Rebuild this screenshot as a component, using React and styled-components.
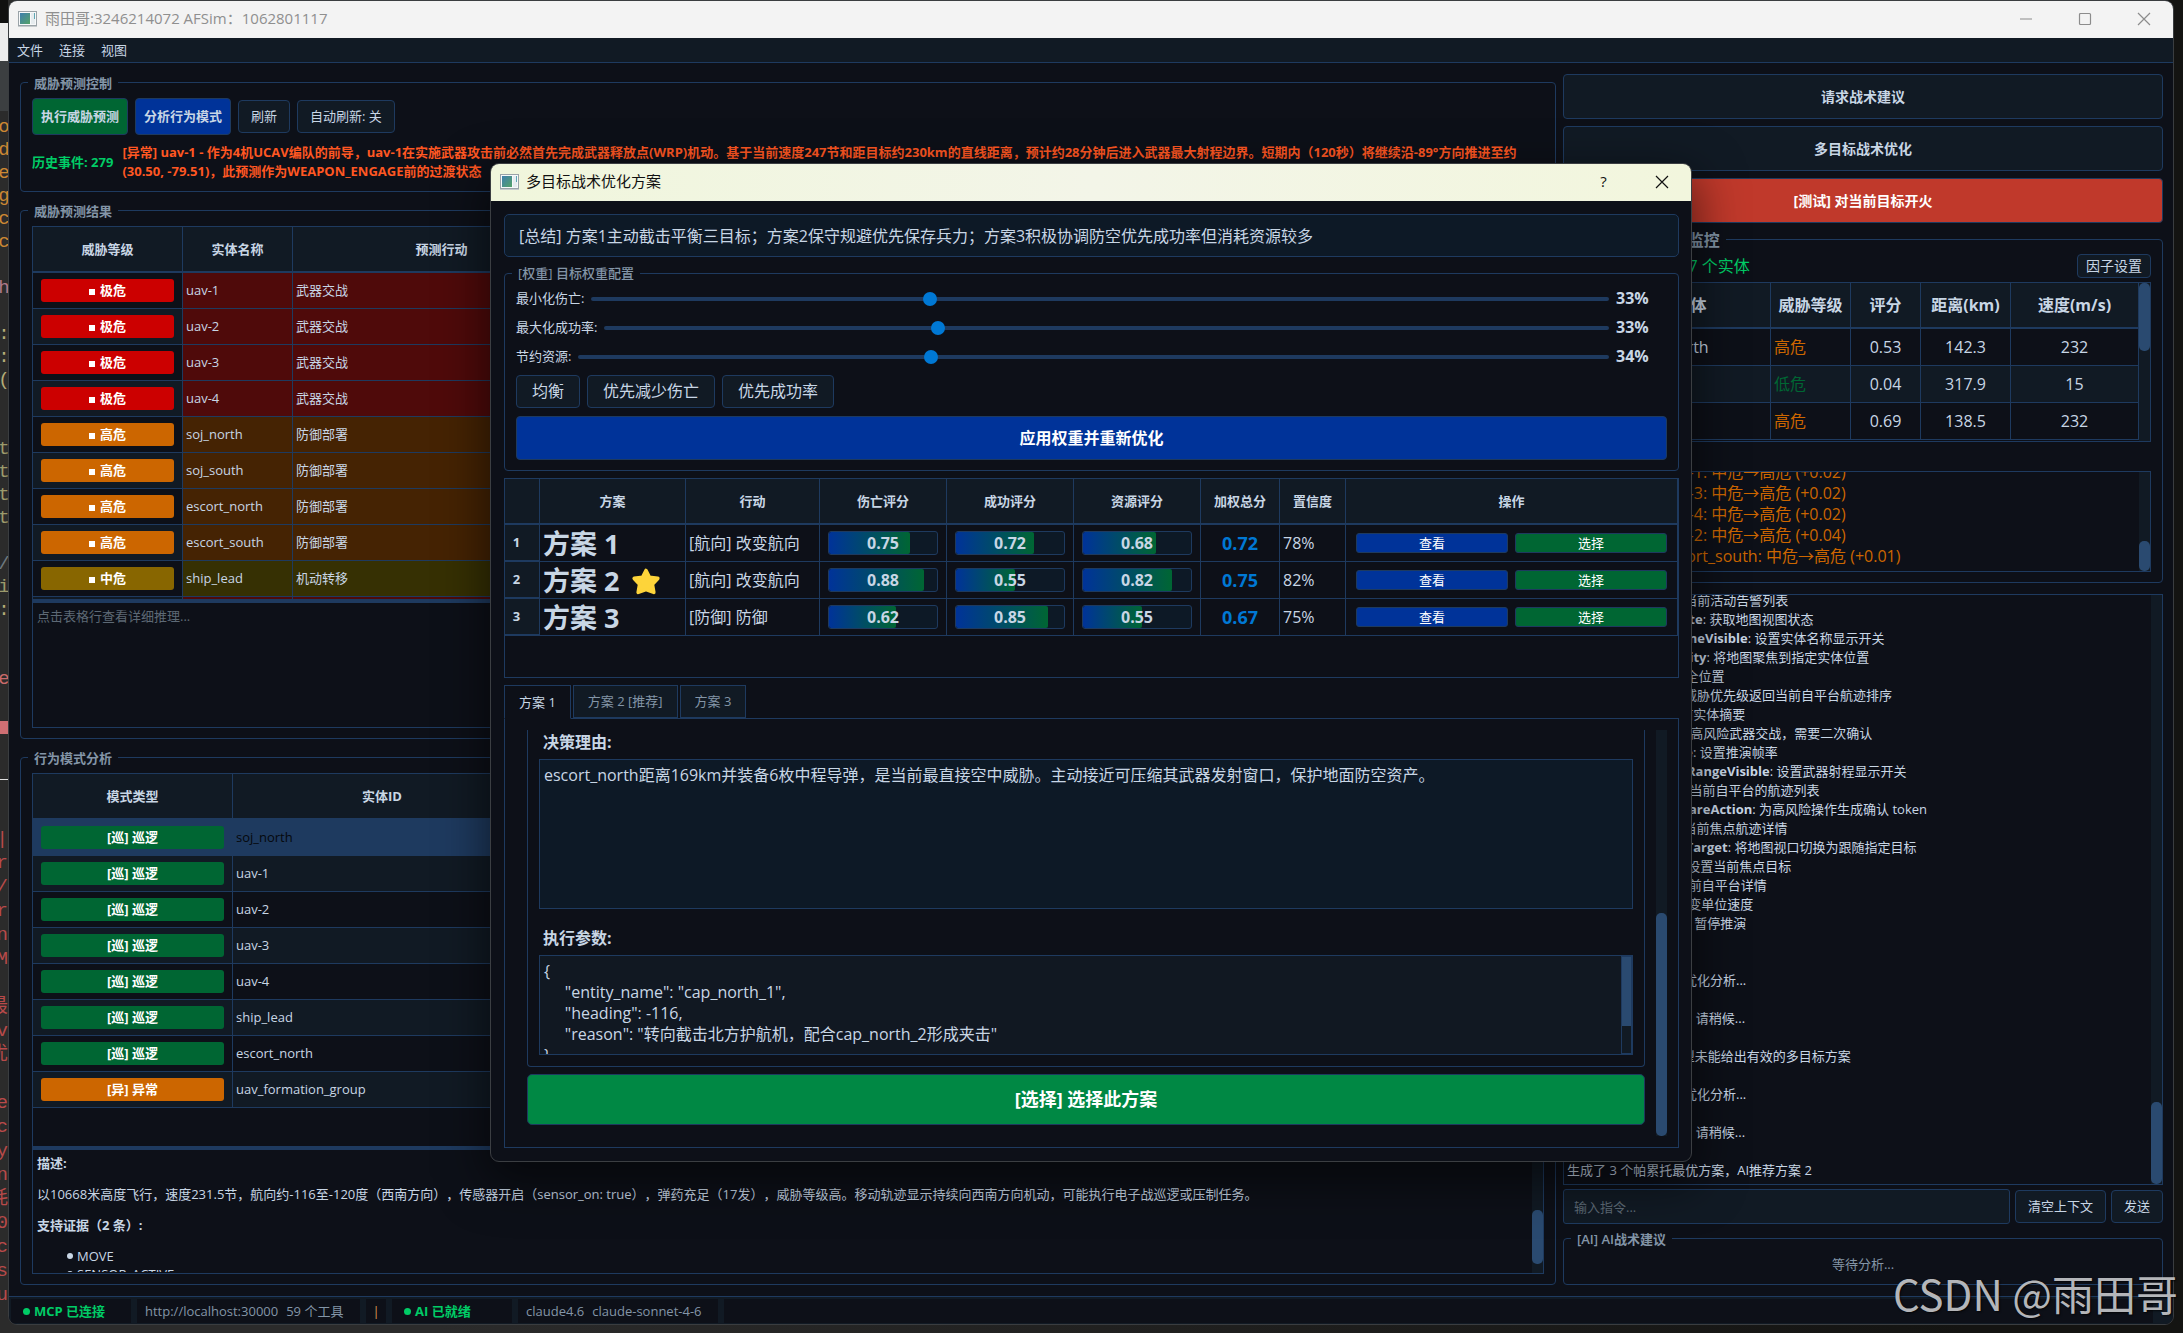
import React, { useState } from "react";
import styled, { createGlobalStyle } from "styled-components";

const threats = [
  ["极危", "uav-1", "武器交战"],
  ["极危", "uav-2", "武器交战"],
  ["极危", "uav-3", "武器交战"],
  ["极危", "uav-4", "武器交战"],
  ["高危", "soj_north", "防御部署"],
  ["高危", "soj_south", "防御部署"],
  ["高危", "escort_north", "防御部署"],
  ["高危", "escort_south", "防御部署"],
  ["中危", "ship_lead", "机动转移"],
  ["极危", "", ""],
];

const levels = {
  极危: { badge: "#cc0000", row: "#4f0a0a" },
  高危: { badge: "#cc6600", row: "#452303" },
  中危: { badge: "#886600", row: "#363003" },
};

const patterns = [
  ["巡", "巡逻", "soj_north"],
  ["巡", "巡逻", "uav-1"],
  ["巡", "巡逻", "uav-2"],
  ["巡", "巡逻", "uav-3"],
  ["巡", "巡逻", "uav-4"],
  ["巡", "巡逻", "ship_lead"],
  ["巡", "巡逻", "escort_north"],
  ["异", "异常", "uav_formation_group"],
];

const monitored = [
  ["escort_north", "高危", "0.53", "142.3", "232"],
  ["ship_lead", "低危", "0.04", "317.9", "15"],
  ["soj_north", "高危", "0.69", "138.5", "232"],
];

const alerts = [
  "[14:31:52] uav-1: 中危→高危 (+0.02)",
  "[14:31:52] uav-3: 中危→高危 (+0.02)",
  "[14:31:52] uav-4: 中危→高危 (+0.02)",
  "[14:31:57] uav-2: 中危→高危 (+0.04)",
  "[14:31:57] escort_south: 中危→高危 (+0.01)",
];

const tools = [
  ["getAllAlerts", "获取当前活动告警列表"],
  ["map.readViewState", "获取地图视图状态"],
  ["map.setEntityNameVisible", "设置实体名称显示开关"],
  ["maps.focusOnEntity", "将地图聚焦到指定实体位置"],
  ["moveTo", "移动到安全位置"],
  ["rankTracksBy", "按威胁优先级返回当前自平台航迹排序"],
  ["getEntity", "获取当前实体摘要"],
  ["weapons.engage", "高风险武器交战，需要二次确认"],
  ["sim.setFrameRate", "设置推演帧率"],
  ["maps.setWeaponRangeVisible", "设置武器射程显示开关"],
  ["listAirTracks", "获取当前自平台的航迹列表"],
  ["safetyGuard.prepareAction", "为高风险操作生成确认 token"],
  ["getFixTrack", "获取当前焦点航迹详情"],
  ["mapsView.followTarget", "将地图视口切换为跟随指定目标"],
  ["setFocusTargets", "设置当前焦点目标"],
  ["getVehicle", "获取当前自平台详情"],
  ["setUnitsSpeed", "改变单位速度"],
  ["simulation.pause", "暂停推演"],
];

const replies = [
  "",
  "",
  "正在进行多目标战术优化分析...",
  "",
  "正在调用AI生成方案，请稍候...",
  "",
  "[AI] 分析已完成，模型未能给出有效的多目标方案",
  "",
  "正在进行多目标战术优化分析...",
  "",
  "正在调用AI生成方案，请稍候...",
  "",
  "生成了 3 个帕累托最优方案，AI推荐方案 2",
];

const plans = [
  { name: "方案 1", action: "[航向] 改变航向", scores: [0.75, 0.72, 0.68], total: "0.72", conf: "78%" },
  { name: "方案 2", best: true, action: "[航向] 改变航向", scores: [0.88, 0.55, 0.82], total: "0.75", conf: "82%" },
  { name: "方案 3", action: "[防御] 防御", scores: [0.62, 0.85, 0.55], total: "0.67", conf: "75%" },
];

const params = `{
     "entity_name": "cap_north_1",
     "heading": -116,
     "reason": "转向截击北方护航机，配合cap_north_2形成夹击"
}`;

// fragments of the editor that stays open behind the window
const codeLines = [
  ["o", "#cc8833"], ["d", "#cc8833"], ["e", "#cc8833"], ["g", "#cc8833"], ["c", "#cc8833"], ["c", "#cc8833"],
  ["", ""], ["h", "#b07a8c"], ["", ""], [":", "#b5ad78"], [":", "#b5ad78"], ["(", "#b5ad78"], ["", ""], ["", ""],
  ["t", "#9c9a6c"], ["t", "#9c9a6c"], ["t", "#9c9a6c"], ["t", "#9c9a6c"], ["", ""], ["/", "#6f7a80"],
  ["i", "#9c9a6c"], [":", "#b5ad78"], ["", ""], ["", ""], ["e", "#c96a6a"],
];

const logLines = ["|", "r", "/", "r", "n", "M", "", "最", "v", "优", "", "e", "c", "y", "n", "耗", "0", "c", "s", "u"];

function AppIcon() {
  return (
    <svg width="19" height="16" viewBox="0 0 19 16" aria-hidden="true">
      <defs>
        <linearGradient id="pane" x1="0" y1="0" x2="1" y2="1">
          <stop offset="0" stopColor="#3f7fae" />
          <stop offset="1" stopColor="#55a268" />
        </linearGradient>
      </defs>
      <rect x="0.5" y="0.5" width="18" height="14" fill="#f7f9fa" stroke="#9aa3a8" />
      <rect x="2" y="2" width="10" height="11" fill="url(#pane)" />
      <rect x="13" y="2" width="4" height="11" fill="#e6ecef" />
      <rect x="16" y="2" width="1" height="6" fill="#5fa7b4" />
      <rect x="0" y="15" width="19" height="1" fill="#c5cacc" />
    </svg>
  );
}

function Glyph({ kind, color }) {
  return (
    <svg width="14" height="14" viewBox="0 0 14 14" fill="none" stroke={color} strokeWidth="1.2" aria-hidden="true">
      {kind === "min" && <path d="M1 7H13" />}
      {kind === "max" && <rect x="1.5" y="1.5" width="11" height="11" rx="1" />}
      {kind === "close" && <path d="M1 1L13 13M13 1L1 13" />}
    </svg>
  );
}

function Star() {
  return (
    <svg width="30" height="27" viewBox="0 0 30 27" aria-hidden="true">
      <path
        d="M15 2.5L18.4 9.4L26.8 10.4L21.4 16.2L22.8 24.4L15 21.6L7.2 24.4L8.6 16.2L3.2 10.4L11.6 9.4Z"
        fill="#fdd43a"
        stroke="#fdd43a"
        strokeWidth="3.6"
        strokeLinejoin="round"
      />
    </svg>
  );
}

function ScrollBar({ start, size, framed }) {
  return (
    <Track $framed={framed}>
      <Thumb $start={start} $size={size} $framed={framed} />
    </Track>
  );
}

function PredictionPanel() {
  return (
    <>
      <Group>
        <Legend>威胁预测控制</Legend>
        <ButtonRow>
          <BigButton $bg="#006633">执行威胁预测</BigButton>
          <BigButton $bg="#003399">分析行为模式</BigButton>
          <PlainButton>刷新</PlainButton>
          <PlainButton>自动刷新: 关</PlainButton>
        </ButtonRow>
        <EventRow>
          <EventCount>历史事件: 279</EventCount>
          <Warning>
            [异常] uav-1 - 作为4机UCAV编队的前导，uav-1在实施武器攻击前必然首先完成武器释放点(WRP)机动。基于当前速度247节和距目标约230km的直线距离，预计约28分钟后进入武器最大射程边界。短期内（120秒）将继续沿-89°方向推进至约
            <br />
            (30.50, -79.51)，此预测作为WEAPON_ENGAGE前的过渡状态
          </Warning>
        </EventRow>
      </Group>

      <Group>
        <Legend>威胁预测结果</Legend>
        <TableBox>
          <Table>
            <colgroup>
              <Col $w={150} />
              <Col $w={110} />
              <Col $w={298} />
              <col />
            </colgroup>
            <thead>
              <tr>
                <Th>威胁等级</Th>
                <Th>实体名称</Th>
                <Th>预测行动</Th>
                <Th />
              </tr>
            </thead>
            <tbody>
              {threats.map(([level, name, action], i) => (
                <Row key={i} $alt={i % 2 === 1}>
                  <Td $pad={8}>
                    {name && (
                      <Badge $bg={levels[level].badge}>
                        <Square />
                        {level}
                      </Badge>
                    )}
                  </Td>
                  <Td $bg={levels[level].row}>{name}</Td>
                  <Td $bg={levels[level].row}>{action}</Td>
                  <Td $bg={levels[level].row} />
                </Row>
              ))}
            </tbody>
          </Table>
        </TableBox>
        <Splitter />
        <ReasonText aria-label="详细推理" placeholder="点击表格行查看详细推理..." readOnly />
      </Group>

      <Group $grow>
        <Legend>行为模式分析</Legend>
        <TableBox>
          <Table>
            <colgroup>
              <Col $w={200} />
              <Col $w={299} />
              <col />
            </colgroup>
            <thead>
              <tr>
                <Th>模式类型</Th>
                <Th>实体ID</Th>
                <Th />
              </tr>
            </thead>
            <tbody>
              {patterns.map(([short, label, id], i) => (
                <Row key={id} $alt={i % 2 === 1} $selected={i === 0}>
                  <Td $pad={8}>
                    <Badge $bg={short === "异" ? "#cc6600" : "#006633"}>
                      [{short}] {label}
                    </Badge>
                  </Td>
                  <Td>{id}</Td>
                  <Td />
                </Row>
              ))}
            </tbody>
          </Table>
        </TableBox>
        <Splitter />
        <Detail>
          <DetailText>
            <h4>描述:</h4>
            <p>
              以10668米高度飞行，速度231.5节，航向约-116至-120度（西南方向），传感器开启（sensor_on: true），弹药充足（17发），威胁等级高。移动轨迹显示持续向西南方向机动，可能执行电子战巡逻或压制任务。
            </p>
            <h4>支持证据（2 条）:</h4>
            <ul>
              <li>MOVE</li>
              <li>SENSOR_ACTIVE</li>
            </ul>
          </DetailText>
          <ScrollBar start={49} size={44} />
        </Detail>
      </Group>
    </>
  );
}

function SidePanel() {
  return (
    <>
      <SideButtons>
        <SideButton>请求战术建议</SideButton>
        <SideButton>多目标战术优化</SideButton>
        <SideButton $danger>[测试] 对当前目标开火</SideButton>
      </SideButtons>

      <Group $large>
        <Legend $large>[威胁] 实时态势监控</Legend>
        <MonitorHead>
          <MonitorState>正在实时监控: 17 个实体</MonitorState>
          <SmallButton>因子设置</SmallButton>
        </MonitorHead>
        <MonitorTable>
          <Table $size={16}>
            <colgroup>
              <Col $w={35} />
              <Col $w={160} />
              <Col $w={80} />
              <Col $w={70} />
              <Col $w={90} />
              <col />
            </colgroup>
            <thead>
              <tr>
                <Th />
                <Th>实体</Th>
                <Th>威胁等级</Th>
                <Th>评分</Th>
                <Th>距离(km)</Th>
                <Th>速度(m/s)</Th>
              </tr>
            </thead>
            <tbody>
              {monitored.map(([name, level, score, dist, speed], i) => (
                <Row key={name} $alt={i % 2 === 1} $tall>
                  <RowHead>{i + 1}</RowHead>
                  <Td>{name}</Td>
                  <Td $color={level === "低危" ? "#006633" : "#cc6600"}>{level}</Td>
                  <Td $center>{score}</Td>
                  <Td $center>{dist}</Td>
                  <Td $center>{speed}</Td>
                </Row>
              ))}
            </tbody>
          </Table>
          <ScrollBar start={0} size={43} />
        </MonitorTable>
        <AlertBox>
          <AlertLines>
            {alerts.map((line) => (
              <div key={line}>{line}</div>
            ))}
          </AlertLines>
          <ScrollBar start={70} size={30} />
        </AlertBox>
      </Group>

      <ChatBox>
        <ChatLines>
          {tools.map(([name, text]) => (
            <ChatLine key={name}>
              • <b>{name}</b>: {text}
            </ChatLine>
          ))}
          {replies.map((text, i) => (
            <ChatLine key={i}>{text}</ChatLine>
          ))}
        </ChatLines>
        <ScrollBar start={86} size={14} />
      </ChatBox>
      <InputRow>
        <CommandInput aria-label="指令" placeholder="输入指令..." />
        <PlainButton>清空上下文</PlainButton>
        <PlainButton>发送</PlainButton>
      </InputRow>
      <Group>
        <Legend>[AI] AI战术建议</Legend>
        <Waiting>等待分析...</Waiting>
      </Group>
    </>
  );
}

function PlanDialog() {
  const [weights, setWeights] = useState([33, 33, 34]);
  const labels = ["最小化伤亡:", "最大化成功率:", "节约资源:"];

  const changeWeight = (index, value) => {
    setWeights(weights.map((w, i) => (i === index ? Number(value) : w)));
  };

  return (
    <Dialog role="dialog" aria-label="多目标战术优化方案">
      <DialogTitle>
        <AppIcon />
        <span>多目标战术优化方案</span>
        <TitleButton aria-label="帮助">?</TitleButton>
        <TitleButton aria-label="关闭">
          <Glyph kind="close" color="#111" />
        </TitleButton>
      </DialogTitle>
      <DialogBody>
        <Summary>[总结] 方案1主动截击平衡三目标；方案2保守规避优先保存兵力；方案3积极协调防空优先成功率但消耗资源较多</Summary>

        <Group>
          <Legend $light>[权重] 目标权重配置</Legend>
          <Weights>
            {labels.map((label, i) => (
              <SliderRow key={label}>
                <label htmlFor={`weight-${i}`}>{label}</label>
                <Slider
                  id={`weight-${i}`}
                  type="range"
                  min="0"
                  max="100"
                  value={weights[i]}
                  onChange={(e) => changeWeight(i, e.target.value)}
                />
                <Percent>{weights[i]}%</Percent>
              </SliderRow>
            ))}
            <ButtonRow>
              <PlainButton $size={16}>均衡</PlainButton>
              <PlainButton $size={16}>优先减少伤亡</PlainButton>
              <PlainButton $size={16}>优先成功率</PlainButton>
            </ButtonRow>
            <ApplyButton>应用权重并重新优化</ApplyButton>
          </Weights>
        </Group>

        <PlanTable>
          <Table>
            <colgroup>
              <Col $w={35} />
              <Col $w={146} />
              <Col $w={134} />
              <Col $w={127} />
              <Col $w={127} />
              <Col $w={127} />
              <Col $w={79} />
              <Col $w={66} />
              <col />
            </colgroup>
            <thead>
              <tr>
                <Th />
                <Th>方案</Th>
                <Th>行动</Th>
                <Th>伤亡评分</Th>
                <Th>成功评分</Th>
                <Th>资源评分</Th>
                <Th>加权总分</Th>
                <Th>置信度</Th>
                <Th>操作</Th>
              </tr>
            </thead>
            <tbody>
              {plans.map((plan, i) => (
                <Row key={plan.name} $tall>
                  <RowHead>{i + 1}</RowHead>
                  <Td>
                    <PlanName>
                      {plan.name}
                      {plan.best && <Star />}
                    </PlanName>
                  </Td>
                  <Td $size={16}>{plan.action}</Td>
                  {plan.scores.map((score, k) => (
                    <Td key={k} $pad={8}>
                      <Meter>
                        <MeterFill style={{ width: `${score * 100}%` }} />
                        <span>{score.toFixed(2)}</span>
                      </Meter>
                    </Td>
                  ))}
                  <Total>{plan.total}</Total>
                  <Td $size={16}>{plan.conf}</Td>
                  <Td $pad={10}>
                    <Actions>
                      <ActionButton $bg="#003399">查看</ActionButton>
                      <ActionButton $bg="#006633">选择</ActionButton>
                    </Actions>
                  </Td>
                </Row>
              ))}
            </tbody>
          </Table>
        </PlanTable>

        <div>
          <Tabs role="tablist">
            <Tab role="tab" aria-selected="true" $active>方案 1</Tab>
            <Tab role="tab" aria-selected="false">方案 2 [推荐]</Tab>
            <Tab role="tab" aria-selected="false">方案 3</Tab>
          </Tabs>
          <Pane role="tabpanel">
            <PaneContent>
              <PlanDetail>
                <FieldLabel htmlFor="reason">决策理由:</FieldLabel>
                <ReasonBox
                  id="reason"
                  readOnly
                  value="escort_north距离169km并装备6枚中程导弹，是当前最直接空中威胁。主动接近可压缩其武器发射窗口，保护地面防空资产。"
                />
                <FieldLabel htmlFor="params" $spaced>执行参数:</FieldLabel>
                <ParamBox>
                  <ParamText id="params" readOnly value={params} />
                  <ScrollBar start={0} size={72} framed />
                </ParamBox>
              </PlanDetail>
              <ChooseButton>[选择] 选择此方案</ChooseButton>
            </PaneContent>
            <ScrollBar start={45} size={55} />
          </Pane>
        </div>
      </DialogBody>
    </Dialog>
  );
}

function App() {
  return (
    <Desktop>
      <GlobalStyle />
      <EditorStrip aria-hidden="true">
        <CodeBlock>
          {codeLines.map(([text, color], i) => (
            <CodeLine key={i} $color={color}>{text}</CodeLine>
          ))}
        </CodeBlock>
        <ErrorBar />
        <LogBlock>
          {logLines.map((text, i) => (
            <CodeLine key={i} $color="#b84a4a" $log>{text}</CodeLine>
          ))}
        </LogBlock>
      </EditorStrip>

      <Window>
        <TitleBar>
          <AppIcon />
          <span>雨田哥:3246214072 AFSim：1062801117</span>
          <TitleButton aria-label="最小化">
            <Glyph kind="min" color="#8c8c8c" />
          </TitleButton>
          <TitleButton aria-label="最大化">
            <Glyph kind="max" color="#8c8c8c" />
          </TitleButton>
          <TitleButton aria-label="关闭">
            <Glyph kind="close" color="#8c8c8c" />
          </TitleButton>
        </TitleBar>
        <MenuBar>
          <MenuItem>文件</MenuItem>
          <MenuItem>连接</MenuItem>
          <MenuItem>视图</MenuItem>
        </MenuBar>
        <Main>
          <LeftColumn>
            <PredictionPanel />
          </LeftColumn>
          <RightColumn>
            <SidePanel />
          </RightColumn>
        </Main>
        <StatusBar>
          <StatusItem $w={120} $ok>
            <Dot />
            MCP 已连接
          </StatusItem>
          <StatusItem $w={223}>
            <span>http://localhost:30000</span>
            <span>59 个工具</span>
          </StatusItem>
          <StatusItem $w={20} $divider>|</StatusItem>
          <StatusItem $w={120} $ok>
            <Dot />
            AI 已就绪
          </StatusItem>
          <StatusItem $w={200}>
            <span>claude4.6</span>
            <span>claude-sonnet-4-6</span>
          </StatusItem>
          <StatusItem $w={20} $fill />
        </StatusBar>
      </Window>

      <PlanDialog />
      <Watermark>CSDN @雨田哥</Watermark>
    </Desktop>
  );
}

const line = "#1e3a5f";
const panel = "#111a24";
const base = "#0d1018";
const text = "#c8d6e5";
const muted = "#8395a7";

const GlobalStyle = createGlobalStyle`
  * {
    box-sizing: border-box;
  }
  body {
    margin: 0;
    background: #141414;
    color: ${text};
    font-family: "Open Sans", "Noto Sans CJK SC", sans-serif;
    font-size: 13px;
    line-height: 19px;
    text-spacing-trim: space-all;
  }
  button, input, textarea {
    font: inherit;
    color: inherit;
  }
  button {
    cursor: pointer;
    white-space: nowrap;
  }
`;

const Desktop = styled.div`
  position: relative;
  display: grid;
  grid-template-columns: 8px minmax(0, 1fr) 9px;
  min-height: 100vh;
  padding-bottom: 8px;
  overflow: hidden;
  background: linear-gradient(90deg, #2b2b2b 0%, #2b2b2b 20%, #141412 90%);
`;

const EditorStrip = styled.div`
  padding-top: 116px;
  overflow: hidden;
  font-family: "Liberation Mono", "Noto Sans CJK SC", monospace;
  font-size: 19px;
  background: linear-gradient(#101010 0 23px, #ececec 23px 61px, #3c3f41 61px 111px, #2b2b2b 111px);
`;

const CodeBlock = styled.div`
  height: 605px;
`;

const CodeLine = styled.div`
  display: flex;
  justify-content: ${(props) => (props.$log ? "flex-end" : "center")};
  height: ${(props) => (props.$log ? 24 : 23)}px;
  line-height: 23px;
  color: ${(props) => props.$color};
`;

const ErrorBar = styled.div`
  height: 13px;
  background: #cf6f73;
`;

const LogBlock = styled.div`
  margin-top: 45px;
  padding-top: 48px;
  border-top: 1px solid #e0e0e0;
`;

const Window = styled.div`
  display: flex;
  flex-direction: column;
  min-width: 0;
  border: 1px solid #3a3d40;
  border-radius: 9px;
  overflow: hidden;
  background: ${base};
`;

const TitleBar = styled.header`
  display: flex;
  align-items: center;
  gap: 8px;
  height: 37px;
  padding: 0 4px 2px 9px;
  background: #f3f3f3;
  color: #8f8f8f;
  font-size: 15px;

  span {
    flex: 1;
  }
`;

const TitleButton = styled.button`
  display: flex;
  align-items: center;
  justify-content: center;
  width: 51px;
  height: 35px;
  padding: 0;
  border: none;
  background: none;
`;

const MenuBar = styled.nav`
  display: flex;
  height: 25px;
  background: ${panel};
  border-bottom: 1px solid ${line};
`;

const MenuItem = styled.button`
  padding: 0 8px;
  border: none;
  background: none;
`;

const Main = styled.main`
  display: flex;
  flex: 1;
  gap: 7px;
  padding: 9px 10px 11px 11px;
`;

const LeftColumn = styled.section`
  display: flex;
  flex: 1;
  flex-direction: column;
  gap: 8px;
  min-width: 0;
`;

const RightColumn = styled.aside`
  display: flex;
  flex-direction: column;
  gap: 4px;
  width: 600px;
`;

const Group = styled.fieldset`
  display: flex;
  flex-direction: column;
  flex: ${(props) => (props.$grow ? 1 : "none")};
  min-width: 0;
  margin: 0;
  padding: ${(props) => (props.$large ? 2 : 5)}px 11px 10px;
  border: 1px solid ${line};
  border-radius: 4px;
`;

const Legend = styled.legend`
  margin-left: -4px;
  padding: ${(props) => (props.$light ? 0 : 2)}px 6px 0;
  color: ${muted};
  font-size: ${(props) => (props.$large ? 16 : 13)}px;
  font-weight: ${(props) => (props.$light ? 500 : 600)};
  line-height: ${(props) => (props.$large ? 23 : 19)}px;
`;

const ButtonRow = styled.div`
  display: flex;
  align-items: center;
  gap: 7px;
`;

const BaseButton = styled.button`
  border: 1px solid ${line};
  border-radius: 4px;
`;

const BigButton = styled(BaseButton)`
  height: 37px;
  padding: 0 8px;
  background: ${(props) => props.$bg};
  font-weight: 700;
`;

const PlainButton = styled(BaseButton)`
  height: 33px;
  padding: 0 ${(props) => (props.$size ? 15 : 12)}px;
  background: ${panel};
  font-size: ${(props) => props.$size || 13}px;
`;

const SmallButton = styled(BaseButton)`
  height: 24px;
  padding: 0 8px;
  background: ${panel};
  font-size: 14px;
  line-height: 20px;
`;

const EventRow = styled.div`
  display: flex;
  align-items: center;
  gap: 9px;
  margin-top: 8px;
  font-weight: 700;
`;

const EventCount = styled.span`
  color: #00cc66;
  white-space: nowrap;
`;

const Warning = styled.p`
  flex: 1;
  min-width: 0;
  margin: 0;
  overflow: hidden;
  color: #ff5722;
  white-space: nowrap;
`;

const TableBox = styled.div`
  height: 373px;
  overflow: hidden;
  border: 1px solid ${line};
  border-bottom: none;
`;

const Table = styled.table`
  width: 100%;
  table-layout: fixed;
  border-collapse: separate;
  border-spacing: 0;
  font-size: ${(props) => props.$size || 13}px;
`;

const Col = styled.col`
  width: ${(props) => props.$w}px;
`;

const Th = styled.th`
  height: 46px;
  padding: 0;
  background: ${panel};
  border-right: 1px solid ${line};
  border-bottom: 2px solid ${line};
  font-weight: 700;
  white-space: nowrap;
`;

const Td = styled.td`
  padding: 0 ${(props) => props.$pad || 3}px;
  background: ${(props) => props.$bg || "transparent"};
  border-right: 1px solid ${line};
  border-bottom: 1px solid ${line};
  color: ${(props) => props.$color || "inherit"};
  font-size: ${(props) => (props.$size ? `${props.$size}px` : "inherit")};
  text-align: ${(props) => (props.$center ? "center" : "left")};
  white-space: nowrap;
`;

const Row = styled.tr`
  height: ${(props) => (props.$tall ? 37 : 36)}px;
  background: ${(props) => (props.$selected ? line : props.$alt ? panel : base)};
  color: ${(props) => (props.$selected ? "#05080c" : "inherit")};
`;

const RowHead = styled.th`
  padding: 0 11px 0 0;
  background: ${panel};
  border-right: 1px solid ${line};
  border-bottom: 2px solid ${line};
  font-size: 13px;
  font-weight: 700;
`;

const Badge = styled.div`
  display: flex;
  align-items: center;
  justify-content: center;
  gap: 5px;
  height: 23px;
  border-radius: 3px;
  background: ${(props) => props.$bg};
  color: #fff;
  font-weight: 700;
  white-space: pre;
`;

const Square = styled.i`
  width: 6px;
  height: 6px;
  margin-top: 2px;
  background: #fff;
`;

const Splitter = styled.div`
  height: 4px;
  background: ${line};
`;

const ReasonText = styled.textarea`
  height: 125px;
  padding: 4px;
  border: 1px solid ${line};
  border-top: none;
  outline: none;
  background: transparent;
  resize: none;

  &::placeholder {
    color: #5d6975;
  }
`;

const Detail = styled.div`
  display: flex;
  flex: 1 0 0;
  min-height: 0;
  overflow: hidden;
  border: 1px solid ${line};
  border-top: none;
`;

const DetailText = styled.div`
  flex: 1;
  height: 122px;
  padding: 4px 4px 0;
  overflow: hidden;

  h4,
  p {
    margin: 0 0 12px;
    font-size: 13px;
  }
  ul {
    margin: 0;
    padding-left: 30px;
    list-style: none;
  }
  li {
    display: flex;
    align-items: center;
    gap: 4px;
    line-height: 18px;
  }
  li::before {
    content: "";
    width: 6px;
    height: 6px;
    border-radius: 50%;
    background: ${text};
  }
`;

const Track = styled.div`
  flex: none;
  align-self: stretch;
  width: 11px;
  background: ${panel};
  border: ${(props) => (props.$framed ? `1px solid ${line}` : "none")};
`;

const Thumb = styled.div`
  position: relative;
  top: ${(props) => props.$start}%;
  height: ${(props) => props.$size}%;
  border-radius: ${(props) => (props.$framed ? 0 : 5)}px;
  background: #2a4a70;
`;

const SideButtons = styled.div`
  display: flex;
  flex-direction: column;
  gap: 7px;
  padding-top: 2px;
`;

const SideButton = styled(BaseButton)`
  height: 45px;
  background: ${(props) => (props.$danger ? "#c0392b" : panel)};
  color: ${(props) => (props.$danger ? "#fff" : text)};
  font-size: 14px;
  font-weight: 700;
`;

const MonitorHead = styled.div`
  display: flex;
  align-items: center;
  justify-content: space-between;
  margin-bottom: 4px;
`;

const MonitorState = styled.span`
  color: #00cc66;
  font-size: 16px;
`;

const MonitorTable = styled.div`
  display: flex;
  align-items: flex-start;
  height: 160px;
  overflow: hidden;
  border: 1px solid ${line};
`;

const AlertBox = styled.div`
  display: flex;
  height: 101px;
  margin-top: 29px;
  border: 1px solid ${line};
`;

const AlertLines = styled.div`
  display: flex;
  flex: 1;
  flex-direction: column;
  justify-content: flex-end;
  padding: 0 8px 4px;
  overflow: hidden;
  color: #cc6600;
  font-size: 16px;
  line-height: 21px;
`;

const ChatBox = styled.div`
  display: flex;
  flex: 1 0 0;
  min-height: 0;
  margin-top: 7px;
  border: 1px solid ${line};
`;

const ChatLines = styled.div`
  display: flex;
  flex: 1;
  flex-direction: column;
  justify-content: flex-end;
  padding: 0 3px 4px;
  overflow: hidden;
`;

const ChatLine = styled.div`
  flex: none;
  height: 19px;
  white-space: nowrap;
`;

const InputRow = styled.div`
  display: flex;
  align-items: center;
  gap: 5px;
`;

const CommandInput = styled.input`
  flex: 1;
  height: 35px;
  padding: 0 10px;
  border: 1px solid ${line};
  border-radius: 3px;
  background: ${panel};

  &::placeholder {
    color: #5d6975;
  }
`;

const Waiting = styled.p`
  margin: 0;
  color: ${muted};
  line-height: 20px;
  text-align: center;
`;

const StatusBar = styled.footer`
  display: flex;
  align-items: center;
  gap: 6px;
  height: 28px;
  padding: 0 20px 0 2px;
  border-top: 1px solid ${line};
  background: ${panel};
`;

const StatusItem = styled.div`
  display: flex;
  align-items: center;
  justify-content: ${(props) => (props.$divider ? "center" : "flex-start")};
  flex: ${(props) => (props.$fill ? 1 : "none")};
  gap: ${(props) => (props.$ok ? 4 : 8)}px;
  min-width: ${(props) => props.$w}px;
  height: 24px;
  padding: 1px ${(props) => (props.$divider ? 4 : props.$ok ? 12 : 8)}px 0;
  background: ${base};
  color: ${(props) => (props.$ok ? "#00cc66" : props.$divider ? "#d89a55" : muted)};
  font-weight: ${(props) => (props.$ok ? 700 : 400)};
`;

const Dot = styled.i`
  width: 7px;
  height: 7px;
  border-radius: 50%;
  background: #00cc66;
`;

const Dialog = styled.div`
  position: absolute;
  top: 163px;
  left: 490px;
  width: 1202px;
  border: 1px solid #3b3e42;
  border-radius: 9px;
  overflow: hidden;
  background: ${base};
  box-shadow: 0 16px 48px 4px rgba(0, 0, 0, 0.55);
`;

const DialogTitle = styled.div`
  display: flex;
  align-items: center;
  gap: 7px;
  height: 37px;
  padding: 0 4px 2px 9px;
  background: linear-gradient(90deg, #f0f6dc, #f3f5e8 50%, #f2f6dd);
  color: #111;
  font-size: 15px;

  span {
    flex: 1;
  }
`;

const DialogBody = styled.div`
  display: flex;
  flex-direction: column;
  gap: 7px;
  padding: 13px 12px 13px 13px;
`;

const Summary = styled.div`
  padding: 11px 14px 9px;
  border: 1px solid ${line};
  border-radius: 5px;
  background: #0d1926;
  font-size: 16px;
  line-height: 21px;
`;

const Weights = styled.div`
  display: flex;
  flex-direction: column;
  gap: 8px;
`;

const SliderRow = styled.div`
  display: flex;
  align-items: center;
  gap: 7px;
  height: 21px;
`;

const Slider = styled.input`
  flex: 1;
  height: 14px;
  margin: 0;
  appearance: none;
  background: transparent;

  &::-webkit-slider-runnable-track {
    height: 4px;
    border-radius: 2px;
    background: ${line};
  }
  &::-webkit-slider-thumb {
    width: 14px;
    height: 14px;
    margin-top: -5px;
    appearance: none;
    border-radius: 50%;
    background: #0078d4;
  }
`;

const Percent = styled.span`
  width: 51px;
  font-size: 16px;
  font-weight: 700;
`;

const ApplyButton = styled(BaseButton)`
  height: 44px;
  background: #003399;
  color: #fff;
  font-size: 16px;
  font-weight: 700;
`;

const PlanTable = styled.div`
  height: 200px;
  overflow: hidden;
  border: 1px solid ${line};
`;

const PlanName = styled.div`
  display: flex;
  align-items: center;
  gap: 12px;
  padding-top: 2px;
  font-size: 27px;
  font-weight: 700;
  line-height: 32px;
`;

const Meter = styled.div`
  position: relative;
  height: 24px;
  border: 1px solid ${line};
  border-radius: 3px;
  overflow: hidden;
  background: #0d1926;
  font-size: 16px;
  font-weight: 700;
  line-height: 22px;
  text-align: center;

  span {
    position: relative;
  }
`;

const MeterFill = styled.div`
  position: absolute;
  top: 0;
  bottom: 0;
  left: 0;
  border-radius: 2px;
  background: linear-gradient(90deg, #003399, #006633);
`;

const Total = styled(Td)`
  color: #0078d4;
  font-size: 18px;
  font-weight: 700;
  text-align: center;
`;

const Actions = styled.div`
  display: flex;
  gap: 7px;
`;

const ActionButton = styled(BaseButton)`
  flex: 1;
  height: 20px;
  padding: 0;
  background: ${(props) => props.$bg};
  border-radius: 3px;
  color: #fff;
  line-height: 16px;
`;

const Tabs = styled.div`
  display: flex;
  align-items: flex-start;
  gap: 2px;
  height: 33px;
`;

const Tab = styled.button`
  height: ${(props) => (props.$active ? 34 : 33)}px;
  padding: 0 14px;
  border: 1px solid ${line};
  border-bottom-color: ${(props) => (props.$active ? base : line)};
  background: ${(props) => (props.$active ? base : panel)};
  color: ${(props) => (props.$active ? text : muted)};
  z-index: 1;
`;

const Pane = styled.div`
  display: flex;
  gap: 11px;
  height: 430px;
  padding: 11px 11px 11px 22px;
  border: 1px solid ${line};
`;

const PaneContent = styled.div`
  display: flex;
  flex: 1;
  flex-direction: column;
  gap: 7px;
`;

const PlanDetail = styled.div`
  display: flex;
  flex-direction: column;
  padding: 0 11px 11px;
  border: 1px solid ${line};
  border-top: none;
  border-radius: 0 0 4px 4px;
`;

const FieldLabel = styled.label`
  margin: ${(props) => (props.$spaced ? 17 : 0)}px 0 5px;
  padding-left: 4px;
  font-size: 16px;
  font-weight: 700;
  line-height: 24px;
`;

const ReasonBox = styled.textarea`
  height: 150px;
  padding: 5px 4px;
  border: 1px solid ${line};
  outline: none;
  background: #0d1926;
  font-size: 16px;
  line-height: 21px;
  resize: none;
`;

const ParamBox = styled.div`
  display: flex;
  height: 100px;
  border: 1px solid ${line};
  background: #111822;
`;

const ParamText = styled.textarea`
  flex: 1;
  padding: 5px 4px 0;
  border: none;
  outline: none;
  overflow: hidden;
  background: transparent;
  font-size: 16px;
  line-height: 21px;
  resize: none;
`;

const ChooseButton = styled(BaseButton)`
  height: 51px;
  border-radius: 5px;
  background: #008844;
  color: #fff;
  font-size: 18px;
  font-weight: 700;
`;

const Watermark = styled.div`
  position: absolute;
  right: 5px;
  bottom: 12px;
  color: rgba(205, 207, 210, 0.88);
  font-family: "Noto Sans CJK SC", sans-serif;
  font-size: 42px;
  font-weight: 400;
  line-height: 56px;
  text-shadow: 1px 1px 2px rgba(0, 0, 0, 0.7);
`;

export default App;
